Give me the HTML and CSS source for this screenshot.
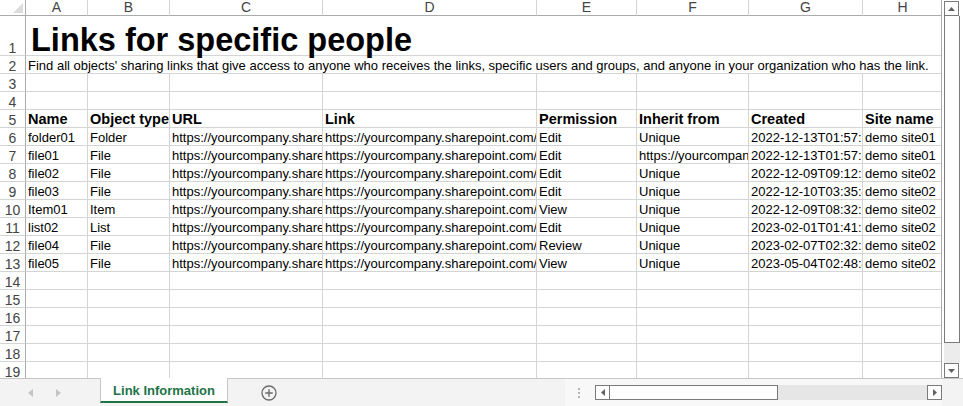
FILE: index.html
```html
<!DOCTYPE html>
<html>
<head>
<meta charset="utf-8">
<link rel="stylesheet" href="styles.css">
</head>
<body>
<div class="app">
  <div class="main">
    <div class="sheet">
      <div class="corner"><svg width="10" height="10" viewBox="0 0 10 10"><polygon points="10,0 10,10 0,10" fill="#dcdcdc"/></svg></div>
      <div class="colhead">A</div><div class="colhead">B</div><div class="colhead">C</div><div class="colhead">D</div><div class="colhead">E</div><div class="colhead">F</div><div class="colhead">G</div><div class="colhead last">H</div>

      <div class="rowhead">1</div><div class="title">Links for specific people</div>
      <div class="rowhead">2</div><div class="desc">Find all objects' sharing links that give access to anyone who receives the links, specific users and groups, and anyone in your organization who has the link.</div>

      <div class="rowhead">3</div><div class="c"></div><div class="c"></div><div class="c"></div><div class="c"></div><div class="c"></div><div class="c"></div><div class="c"></div><div class="c last"></div>
      <div class="rowhead">4</div><div class="c"></div><div class="c"></div><div class="c"></div><div class="c"></div><div class="c"></div><div class="c"></div><div class="c"></div><div class="c last"></div>

      <div class="rowhead">5</div><div class="c h">Name</div><div class="c h">Object type</div><div class="c h">URL</div><div class="c h">Link</div><div class="c h">Permission</div><div class="c h">Inherit from</div><div class="c h">Created</div><div class="c h last">Site name</div>

      <div class="rowhead">6</div><div class="c">folder01</div><div class="c">Folder</div><div class="c">https://yourcompany.sharepoint.com/sites/demosite01/Shared Documents/folder01</div><div class="c">https://yourcompany.sharepoint.com/:f:/s/demosite01/EkX</div><div class="c">Edit</div><div class="c">Unique</div><div class="c">2022-12-13T01:57:36Z</div><div class="c last">demo site01</div>
      <div class="rowhead">7</div><div class="c">file01</div><div class="c">File</div><div class="c">https://yourcompany.sharepoint.com/sites/demosite01/Shared Documents/file01.docx</div><div class="c">https://yourcompany.sharepoint.com/:w:/s/demosite01/EbQ</div><div class="c">Edit</div><div class="c">https://yourcompany.sharepoint.com/sites/demosite01</div><div class="c">2022-12-13T01:57:38Z</div><div class="c last">demo site01</div>
      <div class="rowhead">8</div><div class="c">file02</div><div class="c">File</div><div class="c">https://yourcompany.sharepoint.com/sites/demosite02/Shared Documents/file02.docx</div><div class="c">https://yourcompany.sharepoint.com/:w:/s/demosite02/ERt</div><div class="c">Edit</div><div class="c">Unique</div><div class="c">2022-12-09T09:12:25Z</div><div class="c last">demo site02</div>
      <div class="rowhead">9</div><div class="c">file03</div><div class="c">File</div><div class="c">https://yourcompany.sharepoint.com/sites/demosite02/Shared Documents/file03.xlsx</div><div class="c">https://yourcompany.sharepoint.com/:x:/s/demosite02/EYa</div><div class="c">Edit</div><div class="c">Unique</div><div class="c">2022-12-10T03:35:47Z</div><div class="c last">demo site02</div>
      <div class="rowhead">10</div><div class="c">Item01</div><div class="c">Item</div><div class="c">https://yourcompany.sharepoint.com/sites/demosite02/Lists/list01/1_.000</div><div class="c">https://yourcompany.sharepoint.com/:li:/s/demosite02/E1k</div><div class="c">View</div><div class="c">Unique</div><div class="c">2022-12-09T08:32:14Z</div><div class="c last">demo site02</div>
      <div class="rowhead">11</div><div class="c">list02</div><div class="c">List</div><div class="c">https://yourcompany.sharepoint.com/sites/demosite02/Lists/list02</div><div class="c">https://yourcompany.sharepoint.com/:l:/s/demosite02/FAb</div><div class="c">Edit</div><div class="c">Unique</div><div class="c">2023-02-01T01:41:29Z</div><div class="c last">demo site02</div>
      <div class="rowhead">12</div><div class="c">file04</div><div class="c">File</div><div class="c">https://yourcompany.sharepoint.com/sites/demosite02/Shared Documents/file04.pptx</div><div class="c">https://yourcompany.sharepoint.com/:p:/s/demosite02/EQm</div><div class="c">Review</div><div class="c">Unique</div><div class="c">2023-02-07T02:32:20Z</div><div class="c last">demo site02</div>
      <div class="rowhead">13</div><div class="c">file05</div><div class="c">File</div><div class="c">https://yourcompany.sharepoint.com/sites/demosite02/Shared Documents/file05.pdf</div><div class="c">https://yourcompany.sharepoint.com/:b:/s/demosite02/EVz</div><div class="c">View</div><div class="c">Unique</div><div class="c">2023-05-04T02:48:41Z</div><div class="c last">demo site02</div>

      <div class="rowhead">14</div><div class="c"></div><div class="c"></div><div class="c"></div><div class="c"></div><div class="c"></div><div class="c"></div><div class="c"></div><div class="c last"></div>
      <div class="rowhead">15</div><div class="c"></div><div class="c"></div><div class="c"></div><div class="c"></div><div class="c"></div><div class="c"></div><div class="c"></div><div class="c last"></div>
      <div class="rowhead">16</div><div class="c"></div><div class="c"></div><div class="c"></div><div class="c"></div><div class="c"></div><div class="c"></div><div class="c"></div><div class="c last"></div>
      <div class="rowhead">17</div><div class="c"></div><div class="c"></div><div class="c"></div><div class="c"></div><div class="c"></div><div class="c"></div><div class="c"></div><div class="c last"></div>
      <div class="rowhead">18</div><div class="c"></div><div class="c"></div><div class="c"></div><div class="c"></div><div class="c"></div><div class="c"></div><div class="c"></div><div class="c last"></div>
      <div class="rowhead">19</div><div class="c"></div><div class="c"></div><div class="c"></div><div class="c"></div><div class="c"></div><div class="c"></div><div class="c"></div><div class="c last"></div>
    </div>
    <div class="vscroll">
      <div class="sbtn"><svg width="7" height="4" viewBox="0 0 7 4"><polygon points="0,4 7,4 3.5,0" fill="#606060"/></svg></div>
      <div class="vthumb"></div>
      <div class="vtrack"></div>
      <div class="sbtn"><svg width="7" height="4" viewBox="0 0 7 4"><polygon points="0,0 7,0 3.5,4" fill="#606060"/></svg></div>
    </div>
  </div>
  <div class="tabbar">
    <div class="nav">
      <svg width="5" height="8" viewBox="0 0 5 8"><polygon points="5,0 5,8 0,4" fill="#c4c4c4"/></svg>
      <svg width="5" height="8" viewBox="0 0 5 8"><polygon points="0,0 0,8 5,4" fill="#c4c4c4"/></svg>
    </div>
    <div class="tab">Link Information</div>
    <div class="addarea">
      <svg class="add" width="16" height="16" viewBox="0 0 16 16"><circle cx="8" cy="8" r="7" fill="none" stroke="#6b6b6b" stroke-width="1.3"/><path d="M8 4.2V11.8M4.2 8H11.8" stroke="#6b6b6b" stroke-width="1.4"/></svg>
    </div>
    <div class="hzone">
      <div class="dots"><span></span><span></span><span></span></div>
      <div class="hscroll">
        <div class="hbtn"><svg width="4" height="7" viewBox="0 0 4 7"><polygon points="4,0 4,7 0,3.5" fill="#606060"/></svg></div>
        <div class="hthumb"></div>
        <div class="htrack"></div>
        <div class="hbtn"><svg width="4" height="7" viewBox="0 0 4 7"><polygon points="0,0 0,7 4,3.5" fill="#606060"/></svg></div>
      </div>
    </div>
    <div class="endcorner"></div>
  </div>
</div>
</body>
</html>
```

FILE: styles.css
```css
* { box-sizing: border-box; }
html, body { margin: 0; padding: 0; background: #ffffff; }
body { font-family: "Liberation Sans", Arial, sans-serif; color: #000; }

.app { width: 963px; height: 406px; display: flex; flex-direction: column; overflow: hidden; }

.main { display: flex; height: 378px; }

.sheet {
  width: 942px;
  height: 378px;
  overflow: hidden;
  display: grid;
  grid-template-columns: 26px 62px 82px 153px 214px 100px 112px 114px 79px;
  grid-template-rows: 16px 40px;
  grid-auto-rows: 18px;
  border-right: 1px solid #ababab;
}

.corner {
  border-right: 1px solid #ababab;
  border-bottom: 1px solid #ababab;
  display: flex; align-items: flex-end; justify-content: flex-end;
  padding: 0 2px 2px 0;
}

.colhead {
  border-right: 1px solid #d4d4d4;
  border-bottom: 1px solid #ababab;
  font-size: 14px;
  line-height: 15px;
  text-align: center;
  color: #444;
}
.colhead.last { border-right: none; }

.rowhead {
  border-right: 1px solid #ababab;
  border-bottom: 1px solid #d4d4d4;
  font-size: 14px;
  color: #444;
  text-align: center;
  display: flex; align-items: flex-end; justify-content: center;
  line-height: 14px;
}

.title {
  grid-column: 2 / -1;
  border-bottom: 1px solid #d4d4d4;
  font-weight: bold;
  font-size: 32.5px;
  line-height: 30px;
  padding-left: 5px;
  display: flex; align-items: flex-end;
  white-space: nowrap;
}

.desc {
  grid-column: 2 / -1;
  border-bottom: 1px solid #d4d4d4;
  font-size: 13px;
  line-height: 14px;
  padding: 3px 0 0 2px;
  white-space: nowrap;
  overflow: hidden;
}

.c {
  border-right: 1px solid #d4d4d4;
  border-bottom: 1px solid #d4d4d4;
  font-size: 13px;
  line-height: 14px;
  padding: 3px 0 0 2px;
  white-space: nowrap;
  overflow: hidden;
}
.c.last { border-right: none; }
.c.h { font-weight: bold; font-size: 14.5px; line-height: 15px; padding-top: 2px; }

.vscroll {
  width: 21px;
  display: flex; flex-direction: column;
  padding: 1px 3px 0 2px;
}
.sbtn {
  height: 15px; width: 15px;
  border: 1px solid #7a7a7a;
  background: #fff;
  display: flex; align-items: center; justify-content: center;
}
.vthumb { height: 327px; border: 1px solid #7a7a7a; border-top: none; background: #fff; }
.vtrack { height: 20px; background: #ececec; }

.tabbar {
  height: 28px;
  display: flex;
  background: #f3f3f3;
  border-top: 1px solid #c6c6c6;
}
.nav {
  width: 100px;
  display: flex; align-items: center;
  gap: 23px;
  padding-left: 28px;
}
.tab {
  width: 128px;
  background: #fff;
  border-left: 1px solid #c6c6c6;
  border-right: 1px solid #c6c6c6;
  border-bottom: 2px solid #217346;
  margin-bottom: 3px;
  margin-top: -1px;
  color: #217346;
  font-weight: bold;
  font-size: 13px;
  text-align: center;
  line-height: 26px;
}
.addarea {
  width: 337px;
  display: flex; align-items: center;
  padding-left: 33px;
}
.hzone {
  width: 377px;
  display: flex; align-items: center;
  background: #f8f8f8;
}
.dots {
  width: 30px;
  display: flex; flex-direction: column; align-items: center; gap: 2px;
  padding-right: 2px;
}
.dots span { width: 2px; height: 2px; background: #b5b5b5; }
.hscroll {
  display: flex; height: 15px; width: 347px;
}
.hbtn {
  width: 15px; height: 15px;
  border: 1px solid #7a7a7a;
  background: #fff;
  display: flex; align-items: center; justify-content: center;
}
.hthumb { width: 168px; border: 1px solid #7a7a7a; border-left: none; background: #fff; }
.htrack { flex: 1; background: #e6e6e6; }
.endcorner { flex: 1; background: #f3f3f3; }
```
